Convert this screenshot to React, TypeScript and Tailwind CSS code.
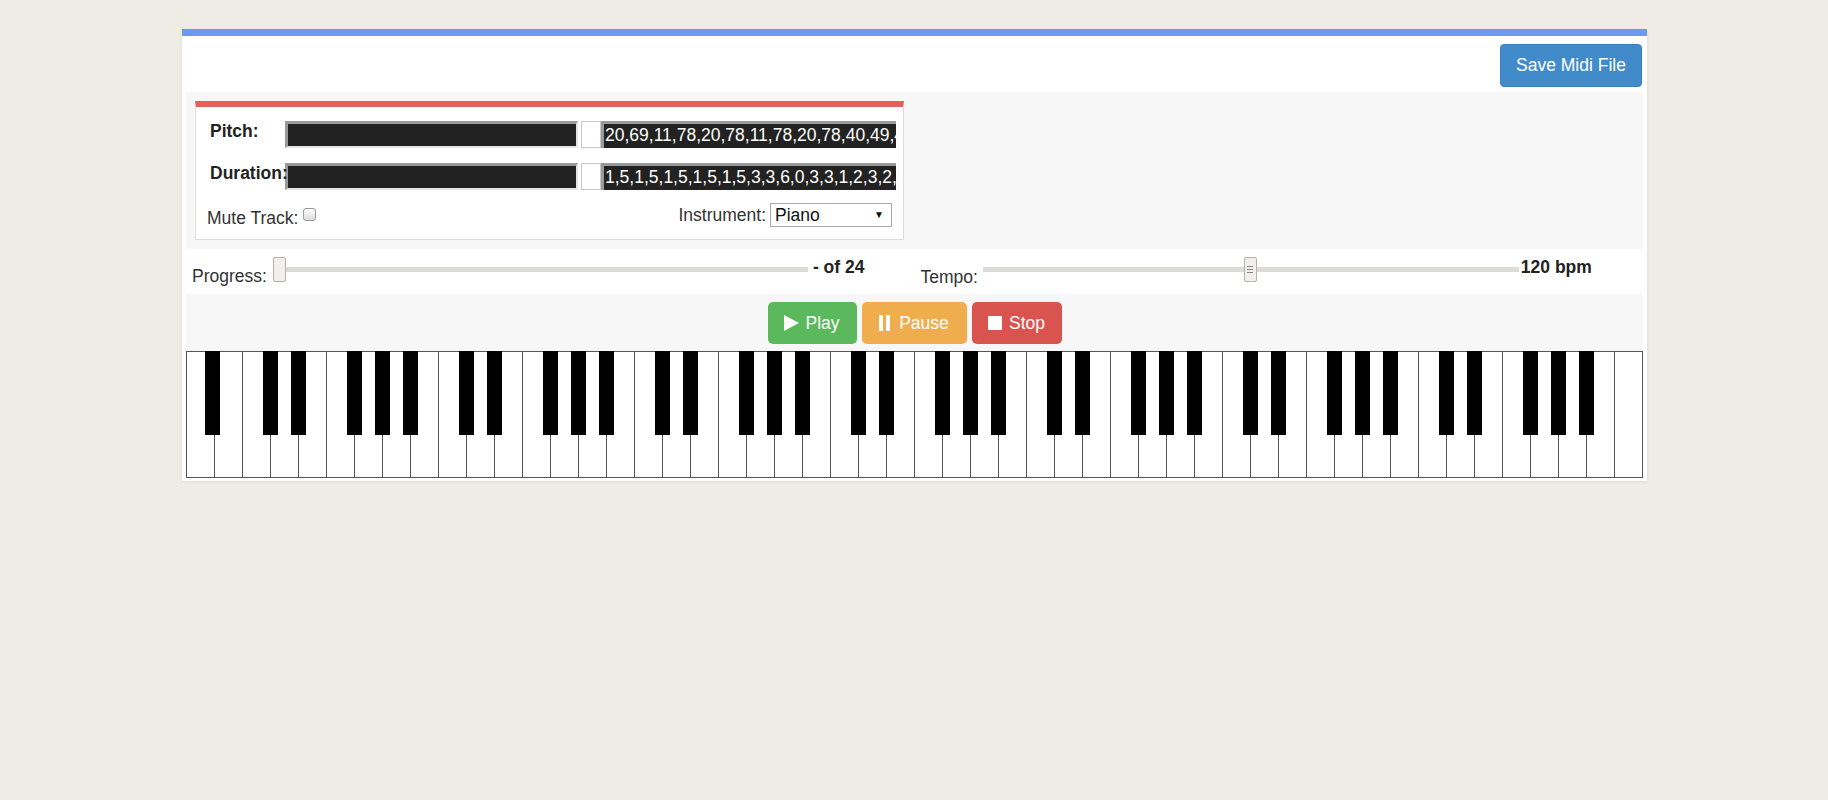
const WHITE_KEYS = 52;
const KEY_W = 28;
const LETTERS = ['A', 'B', 'C', 'D', 'E', 'F', 'G'];

function Piano() {
  // black keys sit on the boundary after A, C, D, F, G
  const blacks: number[] = [];
  for (let i = 0; i < WHITE_KEYS - 1; i++) {
    const l = LETTERS[i % 7];
    if (l === 'B' || l === 'E') continue;
    const edge = (i + 1) * KEY_W;
    blacks.push(i === 0 ? edge - 9 : edge - 7);
  }
  return (
    <svg width={1457} height={127} className="block">
      {Array.from({ length: WHITE_KEYS }, (_, i) => (
        <rect key={i} x={i * KEY_W + 0.5} y={0.5} width={KEY_W} height={126} fill="#fff" stroke="#555" />
      ))}
      {blacks.map(x => (
        <rect key={x} x={x} y={0} width={15} height={84} fill="#000" />
      ))}
    </svg>
  );
}

function NoteBar({ label, values }: { label: string; values: string }) {
  return (
    <div className="flex items-start">
      <div className="relative z-10 w-[76px] shrink-0 pl-[1px] font-bold text-[#222] leading-[20px] whitespace-nowrap">{label}</div>
      <div className="flex h-[27px] w-[611px]">
        <div className="w-[293px] bg-[#222] border-t-[3px] border-l-[3px] border-[#9a9a9a] border-b-[2px] border-b-[#e4e4e4] border-r-[2px] border-r-[#e4e4e4]" />
        <div className="w-[3px]" />
        <div className="w-[20px] bg-white border border-[#c8c8c8]" />
        <div className="flex-1 bg-[#222] border-t-[3px] border-l-[3px] border-[#9a9a9a] text-white leading-[22px] overflow-hidden whitespace-nowrap pl-px">
          {values}
        </div>
      </div>
    </div>
  );
}

function Slider({ width, thumbLeft, grip }: { width: number; thumbLeft: number; grip?: boolean }) {
  return (
    <div className="relative h-[25px] mt-[8px]" style={{ width }}>
      <div className="absolute left-0 right-0 top-[10px] h-[5px] bg-[#dddbd7]" />
      <div
        className="absolute top-0 w-[13px] h-[25px] bg-[#f2f0ec] border border-[#b4b2ae] rounded-[2px] flex flex-col items-center justify-center gap-[2px]"
        style={{ left: thumbLeft }}
      >
        {grip && (
          <>
            <div className="w-[6px] h-px bg-[#888]" />
            <div className="w-[6px] h-px bg-[#888]" />
            <div className="w-[6px] h-px bg-[#888]" />
          </>
        )}
      </div>
    </div>
  );
}

export default function App() {
  return (
    <div className="min-h-screen bg-[#efebe5] pt-[29px] font-['Liberation_Sans',Arial,sans-serif] text-[17.5px] text-[#333]">
      <div className="ml-[182px] w-[1465px] bg-white border-t-[7px] border-[#6c9af0] px-[4px] pb-[3px] shadow-[0_1px_3px_rgba(0,0,0,0.08)]">
        {/* header */}
        <div className="h-[56px] flex justify-end items-start pt-[8px] pr-[1px]">
          <button className="w-[142px] h-[43px] rounded-[4px] bg-[#428bca] border border-[#3a80bd] text-white">
            Save Midi File
          </button>
        </div>

        {/* tracks */}
        <div className="bg-[#f7f7f7] px-[9px] py-[9px]">
          <div className="w-[709px] bg-white border border-[#ddd] border-t-[6px] border-t-[#e5605a] pl-[13px] pr-[7px] pt-[14px] pb-[12px]">
            <NoteBar label="Pitch:" values="20,69,11,78,20,78,11,78,20,78,40,49,40,49,11,78,20,69" />
            <div className="h-[15px]" />
            <NoteBar label="Duration:" values="1,5,1,5,1,5,1,5,1,5,3,3,6,0,3,3,1,2,3,2,1,5,1,5,1,5" />
            <div className="mt-[13px] h-[24px] flex items-center justify-between pr-[4px] leading-[24px]">
              <div className="flex items-center -ml-[2px] mt-[5px]">
                <span>Mute Track:</span>
                <span className="ml-[5px] -mt-[6px] w-[13px] h-[13px] rounded-[3px] border border-[#9a9a9a] bg-gradient-to-b from-[#fcfcfc] to-[#dcdcdc]" />
              </div>
              <div className="flex items-center">
                <span className="mr-[4px]">Instrument:</span>
                <div className="w-[122px] h-[24px] border border-[#a9a9a9] bg-white flex items-center justify-between pl-[4px] pr-[7px] text-[#111]">
                  <span>Piano</span>
                  <span className="text-[10px] leading-none">▼</span>
                </div>
              </div>
            </div>
          </div>
        </div>

        {/* progress / tempo */}
        <div className="h-[45px] flex items-start pl-[6px]">
          <span className="mt-[17px] leading-[20px]">Progress:</span>
          <div className="ml-[6px]">
            <Slider width={535} thumbLeft={0} />
          </div>
          <span className="ml-[5px] mt-[8px] leading-[20px] font-bold text-[#222]">- of 24</span>
          <span className="ml-[56px] mt-[18px] leading-[20px]">Tempo:</span>
          <div className="ml-[5px]">
            <Slider width={536} thumbLeft={261} grip />
          </div>
          <span className="ml-[2px] mt-[8px] leading-[20px] font-bold text-[#222]">120 bpm</span>
        </div>

        {/* transport */}
        <div className="bg-[#f7f7f7] pt-[8px] pb-[7px] flex justify-center gap-[5px]">
          <button className="w-[89px] h-[42px] rounded-[5px] bg-[#5cb85c] text-white flex items-center justify-center gap-[6px]">
            <svg width="15" height="16" viewBox="0 0 15 16"><polygon points="0,0 15,8 0,16" fill="#fff" /></svg>
            <span>Play</span>
          </button>
          <button className="w-[105px] h-[42px] rounded-[5px] bg-[#f0ad4e] text-white flex items-center justify-center gap-[9px]">
            <svg width="11" height="16" viewBox="0 0 11 16"><rect x="0" y="0" width="4" height="16" fill="#fff" /><rect x="7" y="0" width="4" height="16" fill="#fff" /></svg>
            <span>Pause</span>
          </button>
          <button className="w-[90px] h-[42px] rounded-[5px] bg-[#d9534f] text-white flex items-center justify-center gap-[7px]">
            <svg width="14" height="14" viewBox="0 0 14 14"><rect x="0" y="0" width="14" height="14" fill="#fff" /></svg>
            <span>Stop</span>
          </button>
        </div>

        <Piano />
      </div>
    </div>
  );
}
